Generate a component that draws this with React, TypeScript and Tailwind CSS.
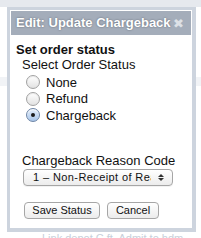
const Radio = ({ checked }: { checked?: boolean }) => (
  <span
    className={
      checked
        ? "flex size-[14px] items-center justify-center rounded-full border border-[#6d85a6] bg-[linear-gradient(#e4eefb,#a9c6ea)] shadow-[inset_0_1px_1px_rgba(255,255,255,0.9)]"
        : "flex size-[14px] items-center justify-center rounded-full border border-[#a2a2a2] bg-[linear-gradient(#ffffff,#e2e2e2)] shadow-[inset_0_1px_1px_rgba(0,0,0,0.08)]"
    }
  >
    {checked && <span className="size-[4px] rounded-full bg-[#1b1b1b]" />}
  </span>
);

const options = [
  { label: "None", checked: false },
  { label: "Refund", checked: false },
  { label: "Chargeback", checked: true },
];

export default function App() {
  return (
    <div className="relative h-[238px] w-[201px] overflow-hidden bg-white font-['Liberation_Sans',Arial,sans-serif] text-[13px] text-[#111]">
      {/* page behind the dialog */}
      <div className="h-[7px] bg-[#e6e9ee]" />
      <div className="mt-[70px] h-[9px] bg-[#f1f3f6]" />
      <div className="mt-[146px] pl-[42px] text-[11px] leading-[13px] whitespace-nowrap text-[#c9d0da]">
        Link depot C ft. Admit to hdm
      </div>

      {/* dialog */}
      <div className="absolute left-[7px] top-[7px] w-[189px] bg-[#cdd4de] pb-[4px] pl-[3px] pr-[4px] pt-[3px]">
        <div className="bg-white p-[1px]">
          <div className="flex h-[24px] items-center justify-between bg-[#a4adba] pl-[5px] pr-[7px]">
            <span className="text-[13px] font-bold text-white [text-shadow:0_0_2px_#5d6470]">
              Edit: Update Chargeback
            </span>
            <span className="font-['DejaVu_Sans',sans-serif] text-[13px] leading-none text-[#dde1e6]">
              ✖
            </span>
          </div>

          <div className="flex flex-col pb-[8px] pl-[5px]">
            <div className="mt-[7px] h-[15px] font-bold leading-[15px]">Set order status</div>
            <div className="h-[15px] pl-[6px] leading-[15px]">Select Order Status</div>

            <div className="mt-[2px] flex flex-col pl-[10px]">
              {options.map((o) => (
                <div key={o.label} className="flex h-[16.5px] items-center gap-[6px]">
                  <Radio checked={o.checked} />
                  <span className="leading-[15px]">{o.label}</span>
                </div>
              ))}
            </div>

            <div className="mt-[29px] h-[15px] pl-[6px] leading-[15px]">Chargeback Reason Code</div>

            <div className="ml-[7px] mt-[1.5px] flex h-[17px] w-[150px] items-center rounded-[4px] border border-[#a6a6a6] bg-[linear-gradient(#ffffff,#ececec)] text-[11px] shadow-[0_1px_0_rgba(0,0,0,0.05)]">
              <span className="w-[127px] overflow-hidden whitespace-nowrap pl-[9px] leading-[15px] tracking-[0.4px]">
                1 – Non-Receipt of Reason
              </span>
              <span className="ml-[7px] flex flex-col items-center gap-[1px]">
                <svg width="6" height="3" viewBox="0 0 6 3">
                  <path d="M0 3 L3 0 L6 3 Z" fill="#333" />
                </svg>
                <svg width="6" height="3" viewBox="0 0 6 3">
                  <path d="M0 0 L3 3 L6 0 Z" fill="#333" />
                </svg>
              </span>
            </div>

            <div className="ml-[8px] mt-[16px] flex gap-[7px] text-[11px]">
              <button className="flex h-[17px] w-[76px] items-center justify-center rounded-[4px] border border-[#a6a6a6] bg-[linear-gradient(#ffffff,#ececec)] leading-none">
                Save Status
              </button>
              <button className="flex h-[17px] w-[52px] items-center justify-center rounded-[4px] border border-[#a6a6a6] bg-[linear-gradient(#ffffff,#ececec)] leading-none">
                Cancel
              </button>
            </div>
          </div>
        </div>
      </div>
    </div>
  );
}
